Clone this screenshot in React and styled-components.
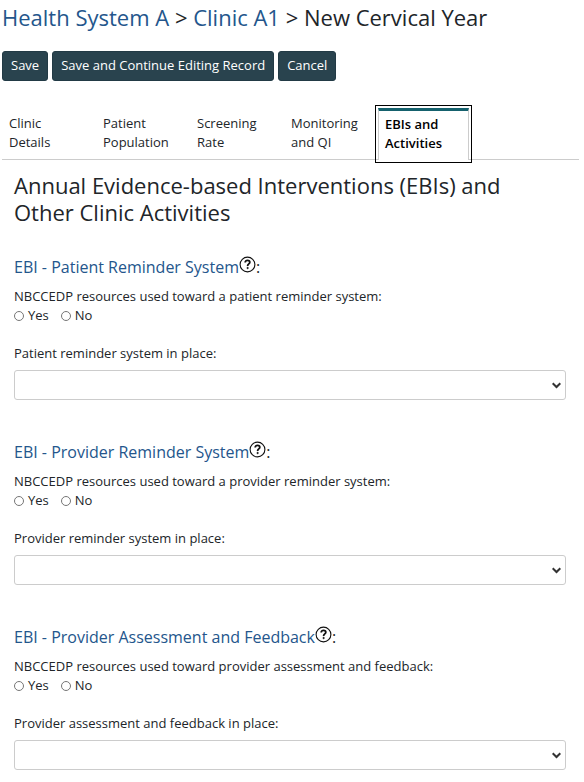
import React, { useState } from "react";
import styled, { createGlobalStyle } from "styled-components";

const GlobalStyle = createGlobalStyle`
  *, *::before, *::after { box-sizing: border-box; }
  body {
    margin: 0;
    background: #fff;
    color: #212529;
    font-family: "Open Sans", "Noto Sans", sans-serif;
    font-size: 13px;
    line-height: 19px;
  }
`;

const Page = styled.div`
  padding: 3px 5px 0 2px;
`;

const Breadcrumb = styled.h1`
  margin: 0 0 19px;
  font-size: 22px;
  line-height: 29px;
  font-weight: 400;
`;

const CrumbLink = styled.a`
  color: #24568c;
  text-decoration: none;
  &:hover { text-decoration: underline; }
`;

const Toolbar = styled.div`
  display: flex;
  gap: 4px;
`;

const Button = styled.button`
  height: 30px;
  padding: 0 8px 2px;
  border: 1px solid #223a45;
  border-radius: 3px;
  background: #29434e;
  color: #fff;
  font: inherit;
  cursor: pointer;
`;

const TabList = styled.div`
  display: flex;
  gap: 3px;
  margin-top: 27px;
  border-bottom: 1px solid #ccc;
`;

const Tab = styled.button`
  flex: 0 0 91px;
  height: ${(p) => (p.$active ? 52 : 51)}px;
  margin-bottom: ${(p) => (p.$active ? -1 : 0)}px;
  padding: 3px 6px 7px;
  border: 1px solid ${(p) => (p.$active ? "#ccc" : "transparent")};
  border-top: 3px solid ${(p) => (p.$active ? "#15616d" : "transparent")};
  border-bottom: 0;
  outline: ${(p) => (p.$active ? "1px solid #000" : "none")};
  outline-offset: 2px;
  background: #fff;
  color: ${(p) => (p.$active ? "#000" : "inherit")};
  font: inherit;
  font-weight: ${(p) => (p.$active ? 600 : 400)};
  text-align: left;
  white-space: pre-line;
  cursor: pointer;
`;

const Panel = styled.main`
  padding: 12px 13px 0 12px;
`;

const PanelTitle = styled.h2`
  margin: 0 0 28px;
  padding-right: 24px;
  font-size: 22px;
  line-height: 27px;
  font-weight: 400;
`;

const Section = styled.section`
  margin-bottom: 39px;
`;

const SectionTitle = styled.h3`
  display: flex;
  align-items: center;
  margin: 0 0 7px;
  font-size: 16px;
  line-height: 26px;
  font-weight: 400;
`;

const HelpButton = styled.button`
  display: flex;
  margin-bottom: 6px;
  padding: 0;
  border: 0;
  background: none;
  color: #111;
  cursor: pointer;
`;

const RadioGroup = styled.fieldset`
  margin: 0 0 19px;
  padding: 0;
  border: 0;
`;

const Legend = styled.legend`
  padding: 0;
`;

const Options = styled.div`
  display: flex;
  gap: 12px;
`;

const Option = styled.label`
  display: flex;
  align-items: center;
  gap: 4px;
`;

const Radio = styled.input`
  appearance: none;
  width: 10px;
  height: 10px;
  margin: 0;
  border: 1px solid #767676;
  border-radius: 50%;
  background: #fff;
  &:checked { background: #29434e; box-shadow: inset 0 0 0 2px #fff; }
`;

const FieldLabel = styled.label`
  display: block;
  margin-bottom: 7px;
`;

const SelectWrap = styled.div`
  position: relative;
`;

const Select = styled.select`
  appearance: none;
  display: block;
  width: 100%;
  height: 30px;
  padding: 0 24px 0 8px;
  border: 1px solid #ccc;
  border-radius: 3px;
  background: #fff;
  color: inherit;
  font: inherit;
`;

const Chevron = styled.svg`
  position: absolute;
  top: 12px;
  right: 5px;
  pointer-events: none;
`;

function HelpIcon() {
  return (
    <svg width="17" height="17" viewBox="0 0 17 17" fill="none" stroke="currentColor" aria-hidden="true">
      <circle cx="8.5" cy="8.5" r="7.4" strokeWidth="1.1" />
      <path d="M6.2 6.4C6.2 5 7.2 4.4 8.5 4.4S10.8 5.1 10.8 6.3C10.8 7.9 8.6 7.9 8.6 9.9" strokeWidth="1.8" />
      <circle cx="8.6" cy="12" r="0.7" fill="currentColor" strokeWidth="0.8" />
    </svg>
  );
}

const tabs = [
  "Clinic\nDetails",
  "Patient\nPopulation",
  "Screening\nRate",
  "Monitoring\nand QI",
  "EBIs and\nActivities",
];

const sections = [
  {
    id: "patient-reminder",
    title: "EBI - Patient Reminder System",
    question: "NBCCEDP resources used toward a patient reminder system:",
    status: "Patient reminder system in place:",
  },
  {
    id: "provider-reminder",
    title: "EBI - Provider Reminder System",
    question: "NBCCEDP resources used toward a provider reminder system:",
    status: "Provider reminder system in place:",
  },
  {
    id: "provider-assessment",
    title: "EBI - Provider Assessment and Feedback",
    question: "NBCCEDP resources used toward provider assessment and feedback:",
    status: "Provider assessment and feedback in place:",
  },
];

function Intervention({ id, title, question, status }) {
  return (
    <Section>
      <SectionTitle>
        <CrumbLink href={`#${id}`}>{title}</CrumbLink>
        <HelpButton type="button" aria-label={`Help: ${title}`}>
          <HelpIcon />
        </HelpButton>
        :
      </SectionTitle>
      <RadioGroup>
        <Legend>{question}</Legend>
        <Options>
          {["Yes", "No"].map((option) => (
            <Option key={option}>
              <Radio type="radio" name={`${id}-resources`} value={option} />
              {option}
            </Option>
          ))}
        </Options>
      </RadioGroup>
      <FieldLabel htmlFor={`${id}-status`}>{status}</FieldLabel>
      <SelectWrap>
        <Select id={`${id}-status`} defaultValue="">
          <option value="" />
          <option value="yes">Yes</option>
          <option value="no">No</option>
        </Select>
        <Chevron width="9" height="7" viewBox="0 0 9 7" fill="none" stroke="#333" strokeWidth="2" aria-hidden="true">
          <path d="M0.7 1.2 4.5 5 8.3 1.2" />
        </Chevron>
      </SelectWrap>
    </Section>
  );
}

export default function App() {
  const [active, setActive] = useState(4);
  return (
    <Page>
      <GlobalStyle />
      <Breadcrumb>
        <CrumbLink href="#health-system">Health System A</CrumbLink>
        {" > "}
        <CrumbLink href="#clinic">Clinic A1</CrumbLink>
        {" > New Cervical Year"}
      </Breadcrumb>
      <Toolbar>
        <Button type="button">Save</Button>
        <Button type="button">Save and Continue Editing Record</Button>
        <Button type="button">Cancel</Button>
      </Toolbar>
      <TabList role="tablist">
        {tabs.map((label, i) => (
          <Tab key={label} type="button" role="tab" aria-selected={i === active} $active={i === active} onClick={() => setActive(i)}>
            {label}
          </Tab>
        ))}
      </TabList>
      <Panel>
        <PanelTitle>Annual Evidence-based Interventions (EBIs) and Other Clinic Activities</PanelTitle>
        {sections.map((section) => (
          <Intervention key={section.id} {...section} />
        ))}
      </Panel>
    </Page>
  );
}
